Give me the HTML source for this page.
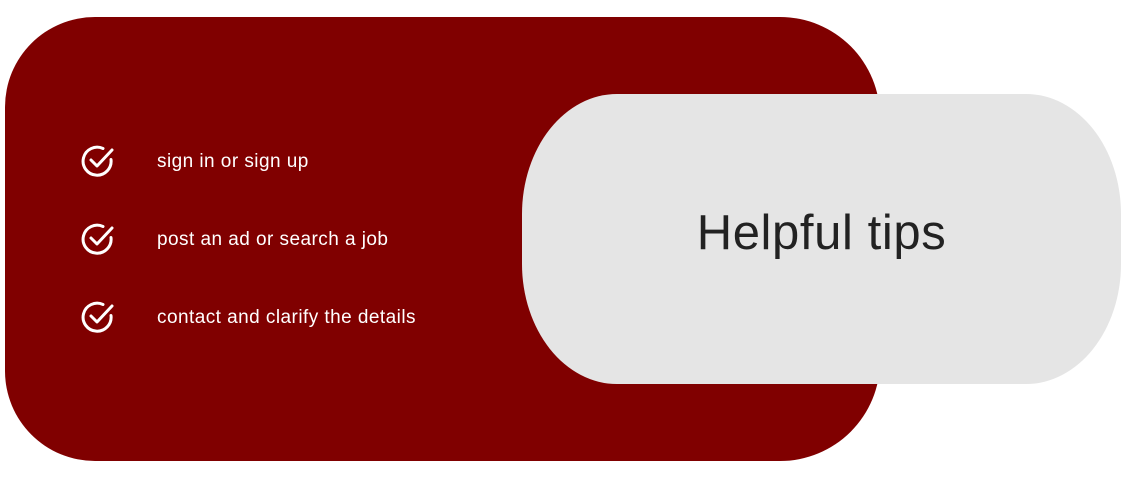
<!DOCTYPE html>
<html><head><style>
body{margin:0;width:1140px;height:482px;background:#fff;position:relative;overflow:hidden;font-family:"Liberation Sans",sans-serif}
.red{position:absolute;left:5px;top:17px;width:875px;height:444px;background:#800000;border-radius:90px 100px 100px 90px/90px 100px 100px 90px}
.grey{position:absolute;left:522px;top:94px;width:599px;height:290px;background:#e5e5e5;border-radius:95px/120px}
.grey span{position:absolute;left:0;right:0;top:111px;text-align:center;font-size:49px;line-height:56px;color:#222;letter-spacing:0.6px}
.item{position:absolute;left:81px;height:34px;display:flex;align-items:center;color:#fff;font-size:19px}
.item svg{width:34px;height:34px}
.item span{position:absolute;left:76px;top:7px;white-space:nowrap;letter-spacing:0.45px}
</style></head><body>
<div class="red"></div>
<div class="item" style="top:144px"><svg viewBox="0 0 34 34"><path d="M30 15.5A14 14 0 1 1 22 4.5" fill="none" stroke="#fff" stroke-width="3" stroke-linecap="round"/><path d="M10 16l6 6L31 6" fill="none" stroke="#fff" stroke-width="3" stroke-linecap="round" stroke-linejoin="round"/></svg><span>sign in or sign up</span></div>
<div class="item" style="top:222px"><svg viewBox="0 0 34 34"><path d="M30 15.5A14 14 0 1 1 22 4.5" fill="none" stroke="#fff" stroke-width="3" stroke-linecap="round"/><path d="M10 16l6 6L31 6" fill="none" stroke="#fff" stroke-width="3" stroke-linecap="round" stroke-linejoin="round"/></svg><span>post an ad or search a job</span></div>
<div class="item" style="top:300px"><svg viewBox="0 0 34 34"><path d="M30 15.5A14 14 0 1 1 22 4.5" fill="none" stroke="#fff" stroke-width="3" stroke-linecap="round"/><path d="M10 16l6 6L31 6" fill="none" stroke="#fff" stroke-width="3" stroke-linecap="round" stroke-linejoin="round"/></svg><span>contact and clarify the details</span></div>
<div class="grey"><span>Helpful tips</span></div>
</body></html>
